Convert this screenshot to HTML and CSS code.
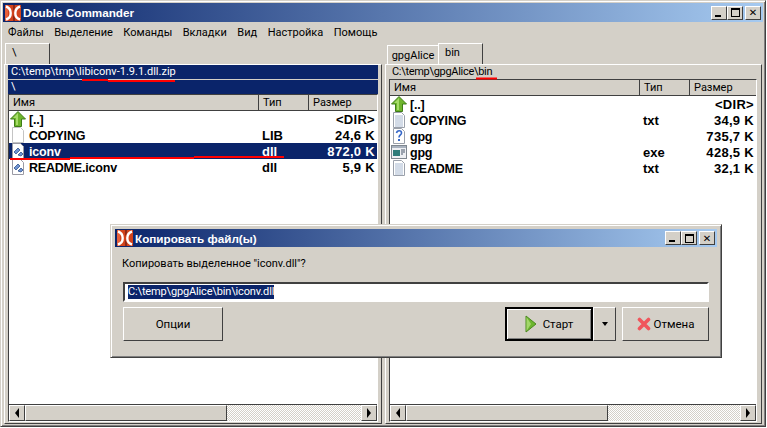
FILE: index.html
```html
<!DOCTYPE html>
<html lang="ru">
<head>
<meta charset="utf-8">
<title>Double Commander</title>
<link rel="stylesheet" href="styles.css">
</head>
<body>
<svg width="0" height="0" class="defs">
  <defs>
    <symbol id="logo" viewBox="0 0 16 16">
      <rect width="16" height="16" fill="#d2431c"/>
      <rect x="0" width="3" height="16" fill="#e8603a"/>
      <path d="M1 1.500C7 3.500 7.500 12.500 1 14.500M15 1.500C9 3.500 8.500 12.500 15 14.500" fill="none" stroke="#fff" stroke-width="2.400"/>
      <path d="M8 0h2v3L8 6.500zM8 16h2v-3L8 9.500z" fill="#8c2a18"/>
    </symbol>
    <symbol id="up" viewBox="0 0 16 16">
      <path d="M8 .5 15.500 8H11.500v7.500h-7V8H.5z" fill="#6fb52c" stroke="#3f7d18"/>
      <path d="M8 2 3 7h3v7h2z" fill="#a6dc68"/>
    </symbol>
    <symbol id="blank" viewBox="0 0 16 16">
      <path d="M2.500.5h8l3 3v12h-11z" fill="#fff" stroke="#c4c4c4"/>
    </symbol>
    <symbol id="dll" viewBox="0 0 16 16">
      <path d="M2.500.5h8l3 3v12h-11z" fill="#fff" stroke="#9a9aa4"/>
      <path d="m4 9 4-4 2 2-4 4zM8 12l3-3 2 2-2 2z" fill="#6f93d2" stroke="#34548c" stroke-width=".8"/>
    </symbol>
    <symbol id="txt" viewBox="0 0 16 16">
      <path d="M2.500.5h8l3 3v12h-11z" fill="#fff" stroke="#9aa0aa"/>
      <path d="M4 4h8M4 6h8M4 8h8M4 10h8M4 12h8M4 14h8" stroke="#a7b8d0"/>
    </symbol>
    <symbol id="unk" viewBox="0 0 16 16">
      <path d="M2.500.5h8l3 3v12h-11z" fill="#fff" stroke="#9aa0aa"/>
      <path d="M5.500 5c.5-3 5-3 5 0 0 2-2.500 2-2.500 4.500" fill="none" stroke="#3567c8" stroke-width="1.600"/>
      <rect x="7" y="11" width="2" height="2" fill="#3567c8"/>
    </symbol>
    <symbol id="exe" viewBox="0 0 16 16">
      <rect x=".5" y="1.500" width="15" height="13" fill="#eef0f4" stroke="#7f8790"/>
      <rect x="1" y="2" width="14" height="2" fill="#a9b2bf"/>
      <rect x="2" y="6" width="7" height="6" fill="#2f7c7a"/>
      <path d="M10 6h4M10 8h4M10 10h2" stroke="#48566a"/>
    </symbol>
  </defs>
</svg>

<div class="window">
  <div class="titlebar">
    <svg class="logo"><use href="#logo"/></svg>
    <span class="title-text">Double Commander</span>
    <span class="caption-buttons">
      <span class="cap"><i class="g-min"></i></span><span class="cap"><i class="g-max"></i></span><span class="cap cap-x">✕</span>
    </span>
  </div>

  <nav class="menu">
    <span>Файлы</span><span>Выделение</span><span>Команды</span><span>Вкладки</span><span>Вид</span><span>Настройка</span><span>Помощь</span>
  </nav>

  <div class="panes">
    <section class="pane pane-left">
      <div class="tabs">
        <span class="tab tab-on tab-root">\</span>
      </div>
      <div class="pane-box">
        <div class="path path-active">C:\temp\tmp\libiconv-1.9.1.dll.zip</div>
        <div class="path path-active path-second">\</div>
        <div class="list">
          <div class="head"><span class="c-name">Имя</span><span class="c-type">Тип</span><span class="c-size">Размер</span></div>
          <div class="row"><svg class="ico"><use href="#up"/></svg><span class="f-name">[..]</span><span class="f-type"></span><span class="f-size">&lt;DIR&gt;</span></div>
          <div class="row"><svg class="ico"><use href="#blank"/></svg><span class="f-name">COPYING</span><span class="f-type">LIB</span><span class="f-size">24,6 K</span></div>
          <div class="row row-sel"><svg class="ico"><use href="#dll"/></svg><span class="f-name">iconv</span><span class="f-type">dll</span><span class="f-size">872,0 K</span></div>
          <div class="row"><svg class="ico"><use href="#dll"/></svg><span class="f-name">README.iconv</span><span class="f-type">dll</span><span class="f-size">5,9 K</span></div>
          <div class="spacer"></div>
          <div class="hscroll">
            <span class="sb-btn"><i class="arr-l"></i></span><span class="thumb"></span><span class="track"></span><span class="sb-btn"><i class="arr-r"></i></span>
          </div>
        </div>
      </div>
    </section>
    <div class="splitter"></div>
    <section class="pane pane-right">
      <div class="tabs">
        <span class="tab tab-off">gpgAlice</span><span class="tab tab-on tab-bin">bin</span>
      </div>
      <div class="pane-box">
        <div class="path path-plain">C:\temp\gpgAlice\bin</div>
        <div class="list">
          <div class="head"><span class="c-name">Имя</span><span class="c-type">Тип</span><span class="c-size">Размер</span></div>
          <div class="row"><svg class="ico"><use href="#up"/></svg><span class="f-name">[..]</span><span class="f-type"></span><span class="f-size">&lt;DIR&gt;</span></div>
          <div class="row"><svg class="ico"><use href="#txt"/></svg><span class="f-name">COPYING</span><span class="f-type">txt</span><span class="f-size">34,9 K</span></div>
          <div class="row"><svg class="ico"><use href="#unk"/></svg><span class="f-name">gpg</span><span class="f-type"></span><span class="f-size">735,7 K</span></div>
          <div class="row"><svg class="ico"><use href="#exe"/></svg><span class="f-name">gpg</span><span class="f-type">exe</span><span class="f-size">428,5 K</span></div>
          <div class="row"><svg class="ico"><use href="#txt"/></svg><span class="f-name">README</span><span class="f-type">txt</span><span class="f-size">32,1 K</span></div>
          <div class="spacer"></div>
          <div class="hscroll">
            <span class="sb-btn"><i class="arr-l"></i></span><span class="thumb"></span><span class="track"></span><span class="sb-btn"><i class="arr-r"></i></span>
          </div>
        </div>
      </div>
    </section>
  </div>

  <svg class="ink" width="767" height="428" viewBox="0 0 767 428">
    <path d="M82 80h26M108 81h67M476 78.500h21M10 159h60M70 158h124M194 157h90" stroke="#f00" stroke-width="2" fill="none"/>
  </svg>

  <div class="dialog">
    <div class="titlebar dialog-title">
      <svg class="logo"><use href="#logo"/></svg>
      <span class="title-text">Копировать файл(ы)</span>
      <span class="caption-buttons">
        <span class="cap"><i class="g-min"></i></span><span class="cap"><i class="g-max"></i></span><span class="cap cap-x">✕</span>
      </span>
    </div>
    <div class="dialog-body">
      <p class="prompt">Копировать выделенное "iconv.dll"?</p>
      <div class="input"><span class="input-sel">C:\temp\gpgAlice\bin\iconv.dll</span></div>
      <div class="actions">
        <button class="btn btn-options">Опции</button>
        <span class="grow"></span>
        <button class="btn btn-start"><svg class="btn-ico" viewBox="0 0 12 18"><path d="M1 1 11 9 1 17z" fill="#6cb52e" stroke="#4a8a1e"/><path d="M1.500 2v14L6 9z" fill="#a3d66a"/></svg>Старт</button>
        <button class="btn btn-drop"><i class="arr-d"></i></button>
        <button class="btn btn-cancel"><svg class="btn-ico-x" viewBox="0 0 14 14"><path d="M2.500 2.500 11.500 11.500M11.500 2.500 2.500 11.500" stroke="#f0565c" stroke-width="3.600" stroke-linecap="round"/></svg>Отмена</button>
      </div>
    </div>
  </div>
</div>
</body>
</html>
```
FILE: styles.css
```css
* { box-sizing: border-box; }
html, body { margin: 0; padding: 0; background: #fff; }
body { width: 767px; height: 428px; overflow: hidden; font-family: "Roboto", "Liberation Sans", sans-serif; font-size: 11px; color: #000; }
.defs { position: absolute; }

.window { position: relative; width: 766px; height: 427px; padding: 2px; background: #d4d0c8; border: 1px solid; border-color: #d4d0c8 #404040 #404040 #d4d0c8; box-shadow: inset 1px 1px 0 #fff, inset -1px -1px 0 #808080; display: flex; flex-direction: column; }

.titlebar { height: 19px; flex: none; display: flex; align-items: center; background: linear-gradient(90deg, #0a246a, #a6caf0); color: #fff; font-family: "Liberation Sans", sans-serif; font-weight: bold; font-size: 11.700px; }
.logo { width: 16px; height: 16px; margin: 0 2px; flex: none; }
.title-text { flex: 1; white-space: nowrap; }
.caption-buttons { display: flex; margin-right: 2px; }
.cap { width: 16px; height: 14px; background: #d4d0c8; border: 1px solid; border-color: #fff #404040 #404040 #fff; display: flex; align-items: center; justify-content: center; font-size: 10px; font-weight: bold; color: #000; font-family: "DejaVu Sans", sans-serif; }
.cap-x { margin-left: 2px; }
.g-min { width: 6px; height: 2px; background: #000; margin-top: 6px; margin-right: 2px; }
.g-max { width: 9px; height: 9px; border: 1px solid #000; border-top-width: 2px; }

.menu { height: 21px; flex: none; display: flex; align-items: center; padding-left: 5px; gap: 10.500px; font-size: 11px; }

.panes { flex: 1; display: flex; min-height: 0; padding: 0 1px; }
.pane { display: flex; flex-direction: column; min-width: 0; }
.pane-left { width: 378px; }
.pane-right { flex: 1; }
.splitter { width: 3px; }

.tabs { height: 21px; flex: none; display: flex; align-items: flex-end; padding-left: 1px; }
.pane-right .tabs { padding-left: 2px; }
.tab { font-size: 11px; background: #d4d0c8; border: 1px solid; border-color: #fff #404040 transparent #fff; border-bottom: 0; display: flex; align-items: center; }
.tab-on { height: 21px; padding-bottom: 4px; }
.tab-root { width: 45px; padding-left: 6px; }
.tab-off { height: 19px; width: 51px; justify-content: center; border-right: 0; padding-top: 1px; }
.tab-bin { width: 45px; padding-left: 6px; }

.pane-box { flex: 1; min-height: 0; display: flex; flex-direction: column; border: 1px solid; border-color: #fff #404040 #404040 #fff; padding: 0 3px 1px 3px; }
.pane-right .pane-box { padding-right: 4px; }

.path { height: 14px; flex: none; font-size: 11px; line-height: 14px; padding-left: 3px; white-space: nowrap; }
.path-active { background: #0a246a; color: #fff; margin-bottom: 1px; }
.path-second { margin-bottom: 0; }
.path-plain { letter-spacing: -.3px; }

.list { flex: 1; min-height: 0; display: flex; flex-direction: column; background: #fff; border: 1px solid; border-color: #404040 #fff #fff #404040; }

.head { height: 16px; flex: none; display: flex; background: #d4d0c8; border-bottom: 1px solid #404040; font-size: 11px; line-height: 15px; }
.head span { padding-left: 4px; border-right: 1px solid #404040; }
.c-name { width: 250px; }
.c-type { width: 50px; }
.head .c-size { flex: 1; border-right: 0; }

.row { height: 16px; flex: none; display: flex; align-items: center; font-family: "Liberation Sans", sans-serif; font-size: 13px; font-weight: bold; white-space: nowrap; }
.row-sel { background: #0a246a; color: #fff; }
.ico { width: 16px; height: 16px; flex: none; margin: 0 3px 0 1px; }
.f-name { width: 229px; padding-top: 1px; font-size: 12.500px; letter-spacing: -.2px; }
.f-type { width: 50px; padding: 1px 0 0 4px; }
.f-size { flex: 1; text-align: right; padding: 1px 2px 0 0; letter-spacing: .3px; }
.spacer { flex: 1; }

.hscroll { height: 17px; flex: none; display: flex; background: #fff; border-top: 1px solid #404040; }
.sb-btn { width: 16px; flex: none; background: #d4d0c8; border: 1px solid; border-color: #fff #404040 #404040 #fff; display: flex; align-items: center; justify-content: center; }
.thumb { flex: none; width: 202px; background: #d4d0c8; border: 1px solid; border-color: #fff #404040 #404040 #fff; }
.track { flex: 1; background: repeating-conic-gradient(#d4d0c8 0 25%, #fff 0 50%) 0 0 / 2px 2px; }
.arr-l { border: 5px solid transparent; border-left: 0; border-right: 4px solid #000; }
.arr-r { border: 5px solid transparent; border-right: 0; border-left: 4px solid #000; }

.ink { position: absolute; left: -1px; top: -1px; pointer-events: none; }

.dialog { position: absolute; left: 109px; top: 223px; width: 612px; height: 134px; padding: 4px; background: #d4d0c8; border: 1px solid; border-color: #d4d0c8 #404040 #404040 #d4d0c8; box-shadow: inset 1px 1px 0 #fff, inset -1px -1px 0 #808080; display: flex; flex-direction: column; }
.dialog-title { height: 18px; }
.dialog-body { flex: 1; padding: 10px 8px 0; font-size: 11px; }
.prompt { margin: 0 0 11px -1px; line-height: 14px; }
.input { height: 20px; background: #fff; border: 2px solid; border-color: #404040 #fff #fff #404040; padding: 1px 3px; line-height: 14px; }
.input-sel { background: #0a246a; color: #fff; display: inline-block; height: 14px; font-size: 11px; letter-spacing: -.15px; }
.actions { display: flex; margin-top: 5px; height: 34px; }
.grow { flex: 1; }
.btn { height: 34px; padding: 0; background: #d4d0c8; border: 1px solid; border-color: #fff #404040 #404040 #fff; font-family: "Roboto", "Liberation Sans", sans-serif; font-size: 11.500px; color: #000; display: flex; align-items: center; justify-content: center; }
.btn-options { width: 100px; }
.btn-start { width: 88px; border: 2px solid #000; box-shadow: inset 1px 1px 0 #fff, inset -1px -1px 0 #808080; gap: 6px; }
.btn-drop { width: 23px; }
.btn-cancel { width: 87px; margin-left: 6px; gap: 3px; }
.btn-ico { width: 12px; height: 18px; }
.btn-ico-x { width: 14px; height: 14px; }
.arr-d { border: 3px solid transparent; border-bottom: 0; border-top: 4px solid #000; }
```
